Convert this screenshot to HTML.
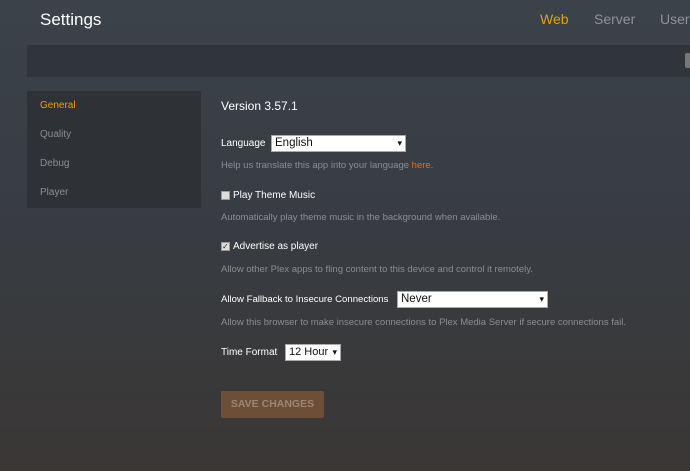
<!DOCTYPE html>
<html><head><style>
body{margin:0;width:690px;height:471px;overflow:hidden;font-family:"Liberation Sans",sans-serif;background:linear-gradient(180deg,#3b424a 0%,#383c42 50%,#3a3735 100%);position:relative;color:#fff}
.a{position:absolute;white-space:nowrap}
.sel{position:absolute;background:#fff;color:#111;border:1px solid #aaa;box-sizing:border-box;font-size:11.5px;padding:0 3px;line-height:15px}
.sel:after{content:"▾";position:absolute;right:3px;top:0;font-size:9px}
.h{color:#8a8d90;font-size:9.5px}
.l{font-size:10px;color:#fff}
.cb{position:absolute;width:7px;height:7px;background:#ddd;border:1px solid #999}
</style></head><body>
<div class="a" style="left:40px;top:10px;font-size:17px">Settings</div>
<div class="a" style="left:540px;top:11px;font-size:14px;color:#e5a00d">Web</div>
<div class="a" style="left:594px;top:11px;font-size:14px;color:#8d9399">Server</div>
<div class="a" style="left:660px;top:11px;font-size:14px;color:#8d9399">Users</div>
<div class="a" style="left:27px;top:45px;width:663px;height:32px;background:#30353b"></div>
<div class="a" style="left:685px;top:53px;width:6px;height:15px;background:#777;border-radius:2px"></div>
<div class="a" style="left:27px;top:91px;width:174px;height:117px;background:#2e3237"></div>
<div class="a" style="left:40px;top:100px;font-size:10px;color:#e5a00d">General</div>
<div class="a" style="left:40px;top:129px;font-size:10px;color:#8a8d90">Quality</div>
<div class="a" style="left:40px;top:158px;font-size:10px;color:#8a8d90">Debug</div>
<div class="a" style="left:40px;top:187px;font-size:10px;color:#8a8d90">Player</div>
<div class="a" style="left:221px;top:99px;font-size:12px">Version 3.57.1</div>
<div class="a l" style="left:221px;top:138px">Language</div>
<div class="sel" style="left:271px;top:135px;width:135px;height:17px">English</div>
<div class="a h" style="left:221px;top:160px">Help us translate this app into your language <span style="color:#e5700d">here</span>.</div>
<div class="cb" style="left:221px;top:191px"></div>
<div class="a l" style="left:233px;top:190px">Play Theme Music</div>
<div class="a h" style="left:221px;top:212px">Automatically play theme music in the background when available.</div>
<div class="cb" style="left:221px;top:242px;font-size:8px;line-height:7px;color:#222">✓</div>
<div class="a l" style="left:233px;top:241px">Advertise as player</div>
<div class="a h" style="left:221px;top:264px">Allow other Plex apps to fling content to this device and control it remotely.</div>
<div class="a l" style="left:221px;top:294px;font-size:9.6px">Allow Fallback to Insecure Connections</div>
<div class="sel" style="left:397px;top:291px;width:151px;height:17px">Never</div>
<div class="a h" style="left:221px;top:317px">Allow this browser to make insecure connections to Plex Media Server if secure connections fail.</div>
<div class="a l" style="left:221px;top:347px">Time Format</div>
<div class="sel" style="left:285px;top:344px;width:56px;height:17px;font-size:11px">12 Hour</div>
<div class="a" style="left:221px;top:391px;width:103px;height:27px;background:#6d4f38;border-radius:2px;color:#9a8574;font-size:10.5px;font-weight:bold;line-height:27px;text-align:center">SAVE CHANGES</div>
</body></html>
